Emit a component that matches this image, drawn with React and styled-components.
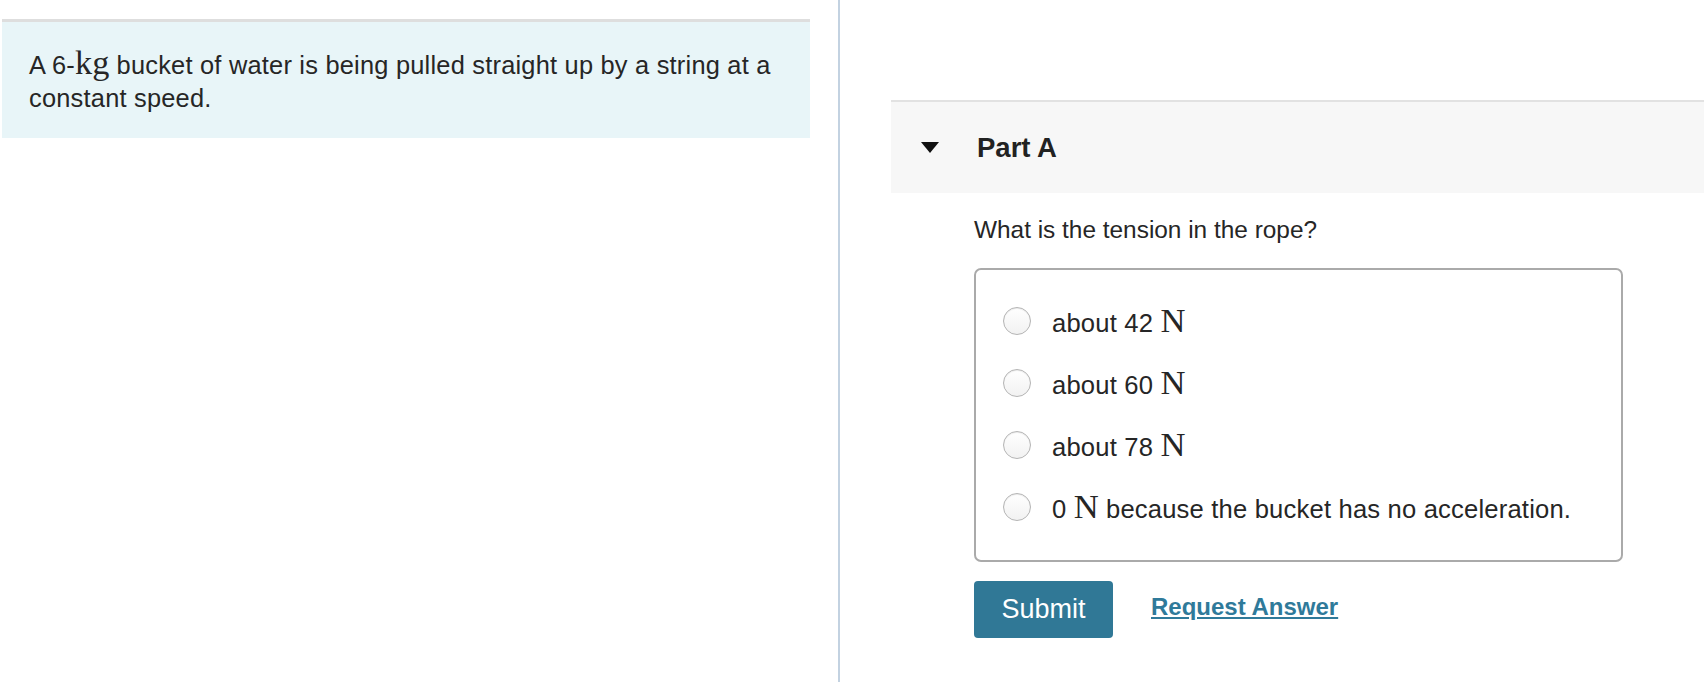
import React from 'react';
import styled, { createGlobalStyle } from 'styled-components';

const GlobalStyle = createGlobalStyle`
  html, body {
    margin: 0;
    padding: 0;
    background: #fff;
  }
  body {
    font-family: "Liberation Sans", Arial, Helvetica, sans-serif;
    color: #222;
  }
`;

const options = [
  { pre: 'about 42', post: '' },
  { pre: 'about 60', post: '' },
  { pre: 'about 78', post: '' },
  { pre: '0', post: ' because the bucket has no acceleration.' },
];

function App() {
  return (
    <Page>
      <GlobalStyle />
      <LeftCol>
        <Intro>
          A 6-<MathText>kg</MathText> bucket of water is being pulled straight up by a string at a constant speed.
        </Intro>
      </LeftCol>
      <RightCol>
        <PartHeader>
          <Caret />
          <PartTitle>Part A</PartTitle>
        </PartHeader>
        <PartBody>
          <Question>What is the tension in the rope?</Question>
          <Choices>
            {options.map((o, i) => (
              <Choice key={i}>
                <Radio />
                <ChoiceText>
                  {o.pre} <MathText>N</MathText>{o.post}
                </ChoiceText>
              </Choice>
            ))}
          </Choices>
          <Actions>
            <SubmitButton>Submit</SubmitButton>
            <RequestLink href="#">Request Answer</RequestLink>
          </Actions>
        </PartBody>
      </RightCol>
    </Page>
  );
}

export default App;

const Page = styled.div`
  display: flex;
  min-height: 682px;
`;

const LeftCol = styled.div`
  width: 840px;
  flex-shrink: 0;
  padding: 19px 28px 0 2px;
  box-sizing: border-box;
  border-right: 2px solid #c3d2e1;
`;

const Intro = styled.div`
  background: #e8f5f8;
  border-top: 3px solid #dedede;
  height: 119px;
  box-sizing: border-box;
  padding: 23px 26px 0 27px;
  font-size: 25.4px;
  line-height: 33px;
  letter-spacing: 0.22px;
  color: #262626;
`;

const MathText = styled.span`
  font-family: "Liberation Serif", "Times New Roman", serif;
  font-size: 1.35em;
  line-height: 1;
  letter-spacing: 0;
`;

const RightCol = styled.div`
  flex: 1;
  padding-top: 100px;
  padding-left: 51px;
`;

const PartHeader = styled.div`
  display: flex;
  align-items: center;
  height: 93px;
  box-sizing: border-box;
  background: #f7f7f7;
  border-top: 2px solid #e2e2e2;
  padding-left: 30px;
`;

const Caret = styled.span`
  width: 0;
  height: 0;
  border-left: 9px solid transparent;
  border-right: 9px solid transparent;
  border-top: 11px solid #111;
  margin-right: 38px;
`;

const PartTitle = styled.h2`
  margin: 0;
  font-size: 27.5px;
  font-weight: bold;
  color: #222;
`;

const PartBody = styled.div`
  padding: 22px 0 0 83px;
`;

const Question = styled.p`
  margin: 0;
  font-size: 24.4px;
  line-height: 30px;
  color: #262626;
`;

const Choices = styled.div`
  margin-top: 23px;
  width: 649px;
  height: 294px;
  box-sizing: border-box;
  border: 2px solid #aaa;
  border-radius: 7px;
  padding: 19px 0 0 27px;
  display: flex;
  flex-direction: column;
`;

const Choice = styled.label`
  display: flex;
  align-items: center;
  height: 62px;
  cursor: pointer;
`;

const Radio = styled.span`
  width: 26px;
  height: 26px;
  border-radius: 50%;
  border: 1px solid #b4b4b4;
  background: linear-gradient(#fff, #f2f2f2);
  box-shadow: inset 0 1px 1px rgba(0, 0, 0, 0.08);
  margin-right: 21px;
  margin-top: 2px;
  flex-shrink: 0;
`;

const ChoiceText = styled.span`
  font-size: 25.6px;
  letter-spacing: 0.18px;
  color: #262626;
`;

const Actions = styled.div`
  display: flex;
  align-items: center;
  margin-top: 19px;
  gap: 38px;
`;

const SubmitButton = styled.button`
  width: 139px;
  height: 57px;
  border: none;
  border-radius: 4px;
  background: #307896;
  color: #fff;
  font-family: "Liberation Sans", Arial, sans-serif;
  font-size: 27px;
  cursor: pointer;
`;

const RequestLink = styled.a`
  font-size: 24px;
  font-weight: bold;
  color: #2f7a9a;
  text-decoration: underline;
  margin-top: -6px;
`;
